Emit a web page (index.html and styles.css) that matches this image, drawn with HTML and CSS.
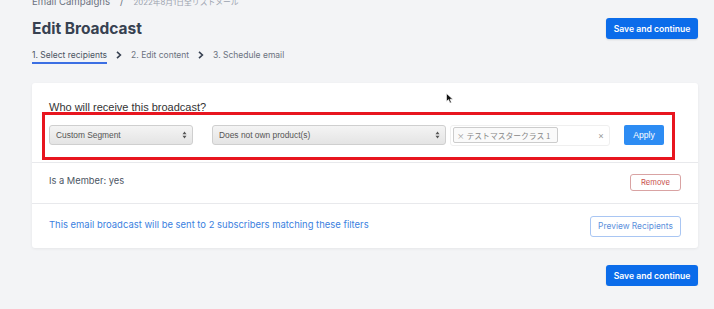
FILE: index.html
```html
<!DOCTYPE html>
<html lang="en">
<head>
<meta charset="utf-8">
<title>Edit Broadcast</title>
<link rel="stylesheet" href="styles.css">
</head>
<body>
<div class="page">
  <div class="crumbs">
    <span>Email Campaigns</span>
    <span class="sep">/</span>
    <span class="jp">2022年8月1日全リストメール</span>
  </div>
  <div class="header">
    <h1 class="title">Edit Broadcast</h1>
    <button class="btn-primary">Save and continue</button>
  </div>
  <div class="tabs">
    <span class="tab active">1. Select recipients</span>
    <svg class="chev" width="6" height="8" viewBox="0 0 6 8"><path d="M1 0.8 L4.4 4 L1 7.2" fill="none" stroke="#374151" stroke-width="1.6"/></svg>
    <span class="tab">2. Edit content</span>
    <svg class="chev" width="6" height="8" viewBox="0 0 6 8"><path d="M1 0.8 L4.4 4 L1 7.2" fill="none" stroke="#374151" stroke-width="1.6"/></svg>
    <span class="tab">3. Schedule email</span>
  </div>

  <div class="card">
    <div class="section filter">
      <div class="question">Who will receive this broadcast?</div>
      <div class="filter-row">
        <div class="select s1">
          <span>Custom Segment</span>
          <svg width="5" height="8" viewBox="0 0 5 8"><path d="M2.5 0.5 L4.5 3.2 L0.5 3.2 Z M2.5 7.5 L4.5 4.8 L0.5 4.8 Z" fill="#555"/></svg>
        </div>
        <div class="select s2">
          <span>Does not own product(s)</span>
          <svg width="5" height="8" viewBox="0 0 5 8"><path d="M2.5 0.5 L4.5 3.2 L0.5 3.2 Z M2.5 7.5 L4.5 4.8 L0.5 4.8 Z" fill="#555"/></svg>
        </div>
        <div class="tags">
          <span class="tag"><span class="tag-x">×</span>テストマスタークラス 1</span>
          <span class="clear">×</span>
        </div>
        <button class="btn-apply">Apply</button>
      </div>
      <div class="highlight"></div>
      <svg class="cursor" width="8" height="11" viewBox="0 0 8 11"><path d="M0.5 0.5 L0.5 8.5 L2.5 6.6 L4 10 L5.4 9.4 L4 6.2 L6.8 6.2 Z" fill="#111" stroke="#fff" stroke-width="0.6"/></svg>
    </div>
    <div class="section member">
      <span class="member-text">Is a Member: yes</span>
      <button class="btn-remove">Remove</button>
    </div>
    <div class="section summary">
      <span class="summary-text">This email broadcast will be sent to 2 subscribers matching these filters</span>
      <button class="btn-preview">Preview Recipients</button>
    </div>
  </div>

  <div class="footer">
    <button class="btn-primary">Save and continue</button>
  </div>
</div>
</body>
</html>
```
FILE: styles.css
```css
* { box-sizing: border-box; }
html, body { margin: 0; padding: 0; }
body {
  background: #f3f4f6;
  font-family: Inter, "Noto Sans", sans-serif;
  color: #374151;
  overflow: hidden;
}
.page {
  padding: 0 16px 0 32px;
}
.crumbs {
  margin-top: -4px;
  height: 12px;
  line-height: 12px;
  font-size: 9.6px;
  color: #9ca3af;
  display: flex;
  align-items: baseline;
  gap: 10px;
  white-space: nowrap;
}
.crumbs span:first-child { color: #6b7280; }
.crumbs .sep { color: #6b7280; }
.crumbs .jp { font-family: Inter, "Noto Sans CJK JP", sans-serif; font-size: 7.8px; }
.header {
  margin-top: 10px;
  height: 21px;
  display: flex;
  justify-content: space-between;
  align-items: center;
}
.title {
  margin: 0;
  font-size: 15.5px;
  font-weight: 700;
  line-height: 20px;
  color: #374151;
}
.btn-primary {
  height: 21px;
  width: 92px;
  padding: 0;
  border: none;
  border-radius: 3px;
  background: #0b6cea;
  color: #fff;
  font-family: Inter, sans-serif;
  font-size: 8.6px;
  font-weight: 600;
  box-shadow: 0 1px 2px rgba(0,0,0,0.12);
}
.tabs {
  margin-top: 9px;
  display: flex;
  align-items: flex-start;
  gap: 9px;
  height: 16px;
}
.tab {
  font-size: 8.5px;
  line-height: 14px;
  color: #6b7280;
  white-space: nowrap;
}
.tab.active {
  color: #4b5563;
  border-bottom: 2px solid #3b6fe3;
}
.chev { margin-top: 3px; }
.card {
  margin-top: 19px;
  background: #fff;
  border-radius: 3px;
  box-shadow: 0 1px 3px rgba(0,0,0,0.06);
}
.section {
  padding: 0 17px;
}
.filter {
  position: relative;
  height: 80px;
  padding-top: 18px;
  border-bottom: 1px solid #e8e9ec;
}
.question {
  font-family: "Liberation Sans", Arial, sans-serif;
  font-size: 11px;
  line-height: 13px;
  color: #333;
}
.filter-row {
  margin-top: 11px;
  display: flex;
  align-items: center;
  height: 20px;
}
.select {
  height: 20px;
  display: flex;
  align-items: center;
  justify-content: space-between;
  padding: 0 5px 0 6px;
  border: 1px solid #cfcfcf;
  border-radius: 3px;
  background: linear-gradient(#f4f4f4, #e4e4e4);
  font-family: "Liberation Sans", Arial, sans-serif;
  font-size: 8.4px;
  color: #555;
}
.s1 { width: 144px; margin-right: 19px; }
.s2 { width: 234px; margin-right: 4px; }
.tags {
  width: 160px;
  height: 21px;
  display: flex;
  align-items: center;
  justify-content: space-between;
  padding: 0 5px 0 2px;
  border: 1px solid #efefef;
  border-radius: 3px;
  background: #fff;
  margin-right: 14px;
}
.tag {
  height: 16px;
  width: 105px;
  display: flex;
  align-items: center;
  padding: 0 3px;
  border: 1px solid #cccccc;
  border-radius: 2px;
  background: #fafafa;
  font-family: "Noto Sans CJK JP", sans-serif;
  font-size: 7.8px;
  color: #888;
  white-space: nowrap;
  overflow: hidden;
}
.tag-x { margin-right: 2px; font-size: 7.5px; color: #999; }
.clear { font-size: 9px; color: #999; }
.btn-apply {
  width: 40px;
  height: 20px;
  padding: 0;
  border: none;
  border-radius: 2px;
  background: #2d8cf3;
  color: #fff;
  font-family: "Liberation Sans", Arial, sans-serif;
  font-size: 8.6px;
}
.highlight {
  position: absolute;
  left: 10px;
  top: 29px;
  width: 633px;
  height: 48px;
  border: 3px solid #e8151f;
  pointer-events: none;
}
.cursor {
  position: absolute;
  left: 414px;
  top: 10px;
}
.member {
  height: 41px;
  display: flex;
  align-items: center;
  justify-content: space-between;
  border-bottom: 1px solid #e8e9ec;
}
.member-text {
  font-size: 9.3px;
  color: #4b5563;
  margin-top: -5px;
}
.btn-remove {
  width: 51px;
  height: 17px;
  padding: 0;
  border: 1px solid #d9a3a3;
  border-radius: 3px;
  background: #fff;
  color: #c8504b;
  font-family: Inter, sans-serif;
  font-size: 7.6px;
  margin-top: -1px;
}
.summary {
  height: 44px;
  display: flex;
  align-items: center;
  justify-content: space-between;
}
.summary-text {
  font-size: 9.45px;
  color: #3b7fe0;
  margin-top: -4px;
}
.btn-preview {
  width: 91px;
  height: 21px;
  padding: 0;
  border: 1px solid #a9c6f3;
  border-radius: 3px;
  background: #fff;
  color: #5b8fdc;
  font-family: Inter, sans-serif;
  font-size: 8.4px;
}
.footer {
  margin-top: 17px;
  display: flex;
  justify-content: flex-end;
}
```
